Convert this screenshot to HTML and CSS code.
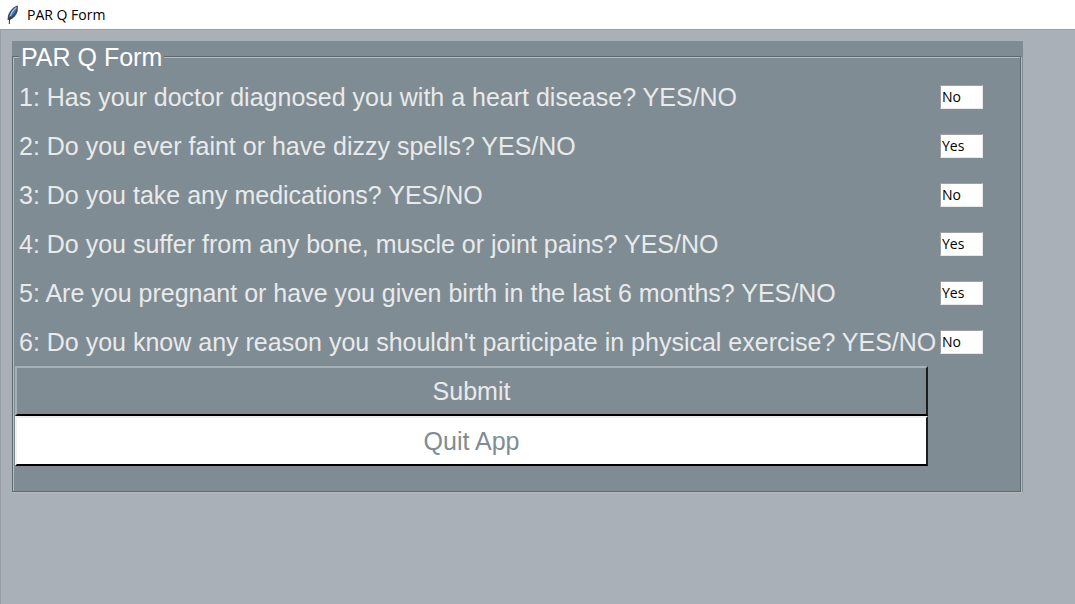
FILE: index.html
```html
<!DOCTYPE html>
<html lang="en">
<head>
<meta charset="utf-8">
<title>PAR Q Form</title>
<link rel="stylesheet" href="styles.css">
</head>
<body>
<header class="titlebar">
  <svg class="feather" viewBox="0 0 14 20" aria-hidden="true">
    <path d="M11.500 .5C8 1.500 3.500 5.500 2 10.500L1.500 15l2.700-.3C8 13 10.500 10 11.500 6.500L12 2z" fill="#3b4654"/>
    <path d="M10.500 2C7.500 3 4.500 7 3.500 10.500l-.3 2.500C6.500 11.500 9 8.500 10 5.500z" fill="#3f78bd"/>
    <path d="M10.500 2.500C7.500 4.500 5.500 7.500 4 11.500" fill="none" stroke="#a3c6ea" stroke-width="1.200"/>
    <path d="M4.500 11.500C3.600 14 3.300 16 3.300 19" fill="none" stroke="#2a2a2a"/>
  </svg>
  <h1 class="title">PAR Q Form</h1>
</header>
<main class="window">
  <form class="panel">
    <fieldset class="group">
      <legend class="legend">PAR Q Form</legend>
      <div class="grid">
        <label class="question" for="q1">1: Has your doctor diagnosed you with a heart disease? YES/NO</label>
        <input class="entry" id="q1" type="text" value="No">
        <label class="question" for="q2">2: Do you ever faint or have dizzy spells? YES/NO</label>
        <input class="entry" id="q2" type="text" value="Yes">
        <label class="question" for="q3">3: Do you take any medications? YES/NO</label>
        <input class="entry" id="q3" type="text" value="No">
        <label class="question" for="q4">4: Do you suffer from any bone, muscle or joint pains? YES/NO</label>
        <input class="entry" id="q4" type="text" value="Yes">
        <label class="question" for="q5">5: Are you pregnant or have you given birth in the last 6 months? YES/NO</label>
        <input class="entry" id="q5" type="text" value="Yes">
        <label class="question" for="q6">6: Do you know any reason you shouldn't participate in physical exercise? YES/NO</label>
        <input class="entry" id="q6" type="text" value="No">
        <button class="button submit" type="submit">Submit</button>
        <button class="button quit" type="button">Quit App</button>
      </div>
    </fieldset>
  </form>
</main>
</body>
</html>
```
FILE: styles.css
```css
* { box-sizing: border-box; }

body {
  margin: 0;
  min-height: 100vh;
  display: flex;
  flex-direction: column;
  background: #a9b0b7;
  font-family: "Liberation Sans", Arial, sans-serif;
}

.titlebar {
  display: flex;
  align-items: center;
  gap: 7px;
  height: 29px;
  padding: 0 6px;
  background: #fff;
}

.feather { width: 14px; height: 20px; }

.title {
  margin: 0;
  font: 14px/20px "Open Sans", "Noto Sans", sans-serif;
  color: #000;
}

.window {
  flex: 1;
  padding: 11px 52px 11px 11px;
  border-top: 1px solid #98a0a5;
  border-left: 1px solid #98a0a5;
}

.panel {
  background: #808c93;
  font-size: 25px;
  line-height: 30px;
}

.group {
  margin: 0 2px 0 0;
  min-width: 0;
  padding: 0 2px 25px;
  border: 1px solid #5f696e;
  box-shadow: inset 1px 1px #b4bcc1, 1px 1px #b4bcc1;
}

.legend {
  margin-left: 4px;
  padding: 1px 2px 0;
  background: #808c93;
  color: #fff;
}

.grid {
  display: grid;
  grid-template-columns: minmax(0, 913px) auto;
  grid-auto-rows: minmax(49px, auto);
  align-items: center;
  justify-content: start;
}

.question {
  padding-left: 4px;
  color: #e8eaeb;
  white-space: nowrap;
}

.entry {
  width: 43px;
  height: 24px;
  margin-left: 12px;
  padding: 0 1px;
  border: 1px solid;
  border-color: #a0a0a0 #e8e8e8 #e8e8e8 #a0a0a0;
  background: #fff;
  color: #000;
  font: 14px/20px "Open Sans", "Noto Sans", sans-serif;
}

.button {
  grid-column: 1;
  height: 50px;
  padding: 0;
  border: 2px solid;
  font: inherit;
}

.submit {
  background: #808c93;
  color: #e8eaeb;
  border-color: #a7b0b5 #1c1f20 #000 #a7b0b5;
}

.quit {
  background: #fff;
  color: #808c93;
  border-color: #f0f0f0 #1c1f20 #000 #f0f0f0;
}
```
